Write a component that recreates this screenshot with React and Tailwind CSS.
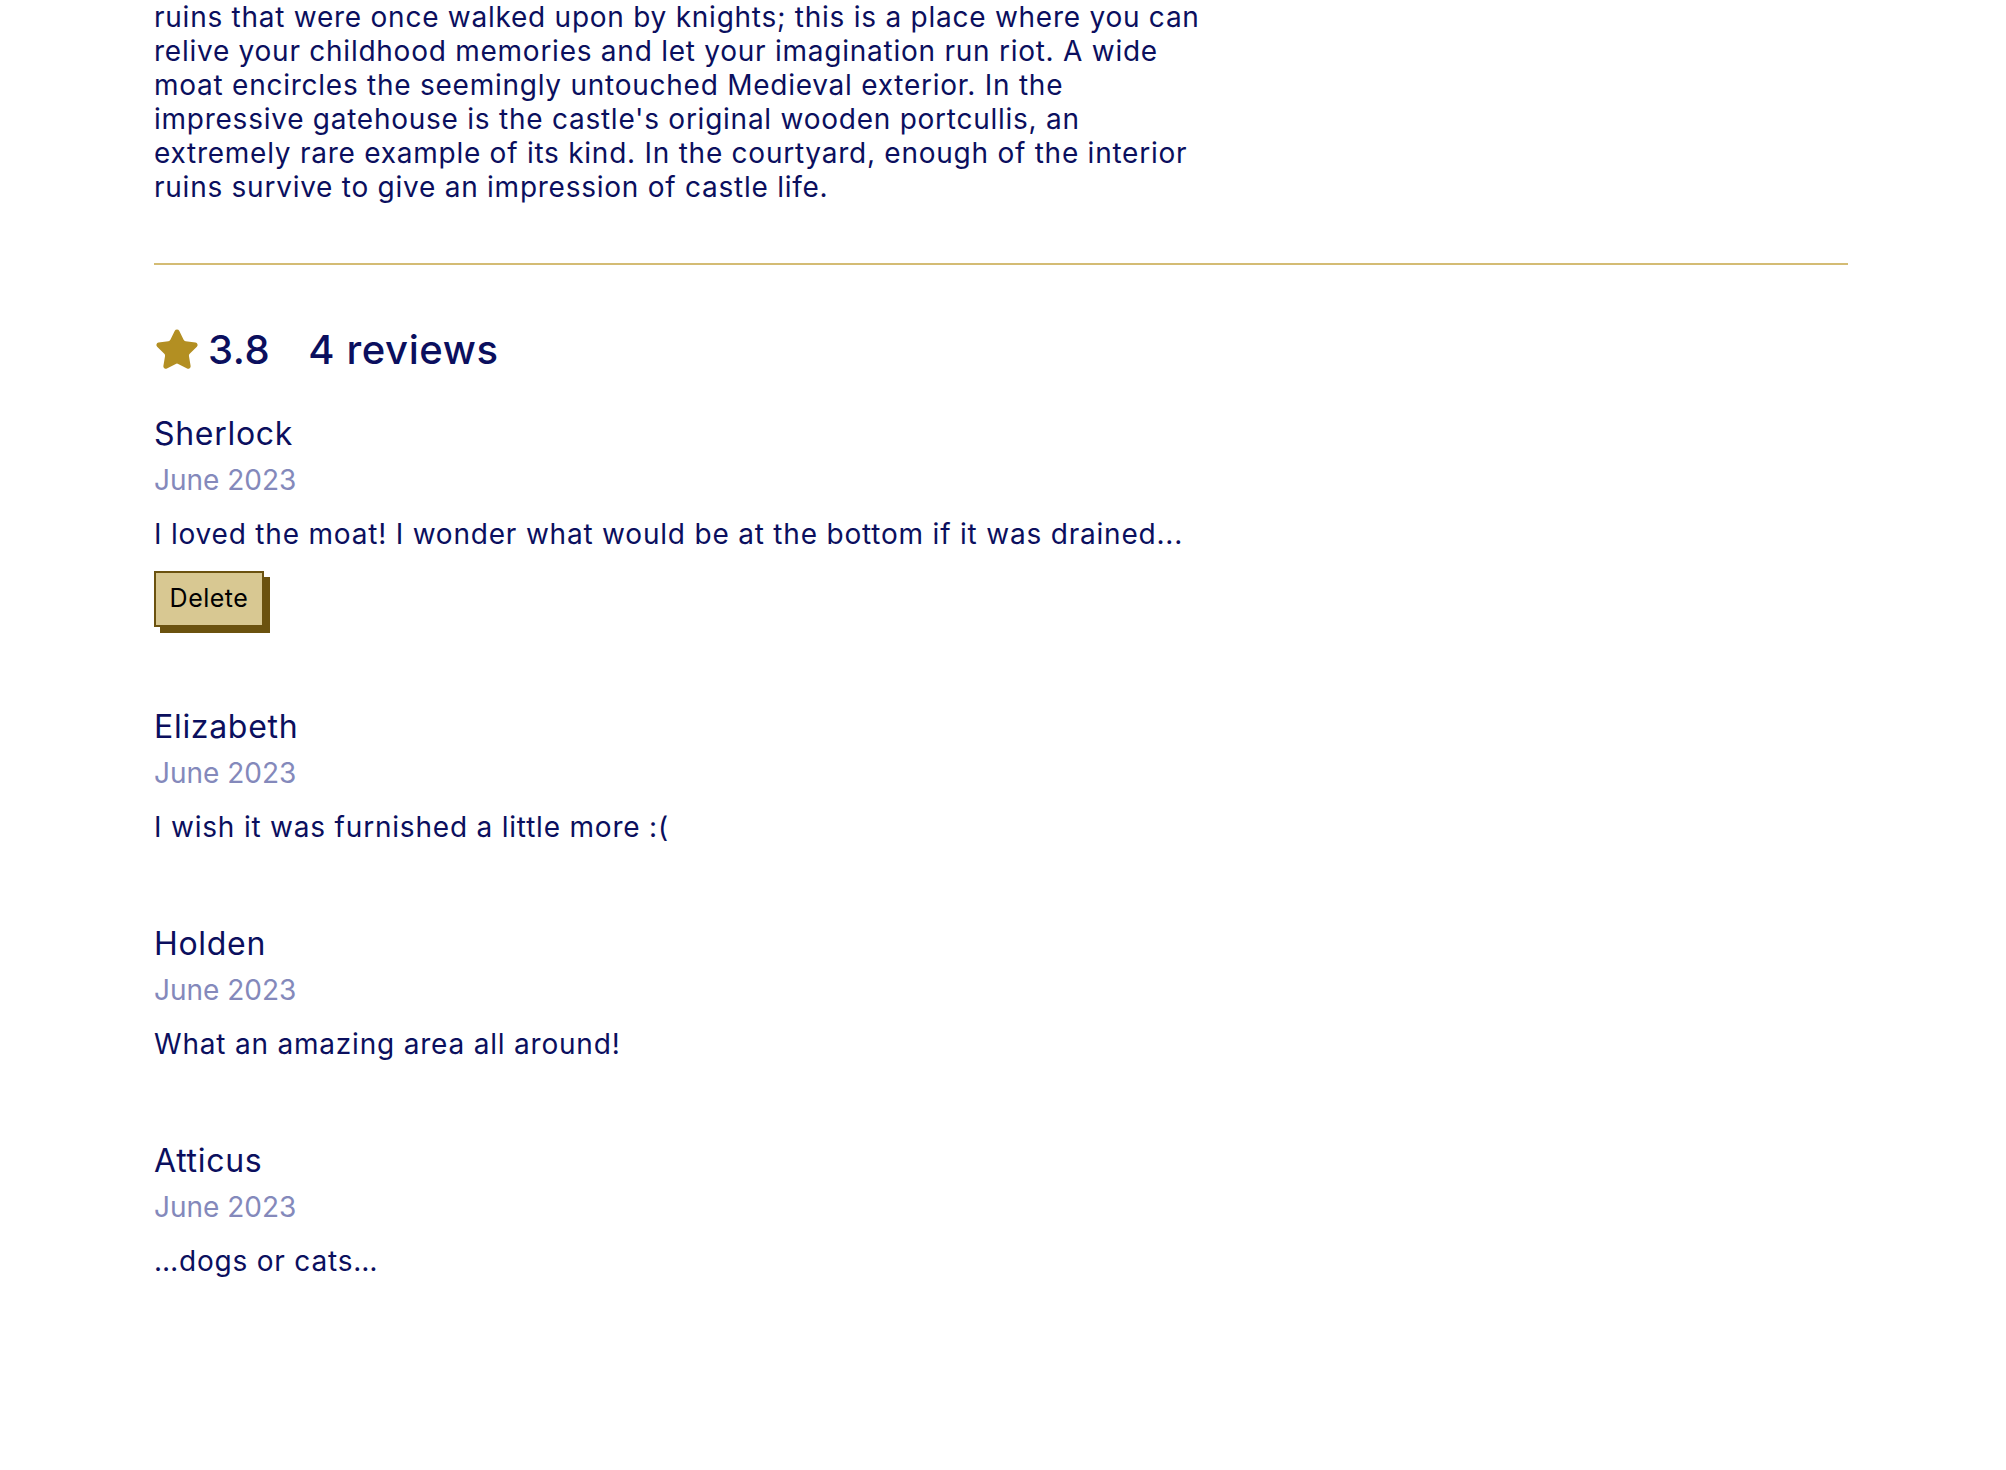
import { Star } from 'lucide-react';

const intro = [
  'ruins that were once walked upon by knights; this is a place where you can',
  'relive your childhood memories and let your imagination run riot. A wide',
  'moat encircles the seemingly untouched Medieval exterior. In the',
  "impressive gatehouse is the castle's original wooden portcullis, an",
  'extremely rare example of its kind. In the courtyard, enough of the interior',
  'ruins survive to give an impression of castle life.',
];

const reviews = [
  { name: 'Sherlock', date: 'June 2023', text: 'I loved the moat! I wonder what would be at the bottom if it was drained...', own: true },
  { name: 'Elizabeth', date: 'June 2023', text: 'I wish it was furnished a little more :(' },
  { name: 'Holden', date: 'June 2023', text: 'What an amazing area all around!' },
  { name: 'Atticus', date: 'June 2023', text: '…dogs or cats…' },
];

const Review = ({ review }) => (
  <div className="mb-[80px]">
    <h3 className="text-[32px] leading-[39px] tracking-[0.7px] text-[#0b0f5e]">{review.name}</h3>
    <p className="mt-[10px] text-[28px] leading-[34px] text-[#8489bb]">{review.date}</p>
    <p className="mt-[20px] text-[28px] leading-[34px] tracking-[0.8px] text-[#0b0f5e] whitespace-nowrap">{review.text}</p>
    {review.own && (
      <button className="mt-[20px] h-[56px] w-[110px] border-2 border-[#6b520f] bg-[#d8c892] text-[25px] tracking-[0.5px] text-black shadow-[6px_6px_0_#6b520f]">
        Delete
      </button>
    )}
  </div>
);

export default function App() {
  return (
    <div className="min-h-screen bg-white pl-[154px] pr-[158px] font-['Inter',sans-serif]">
      <p className="w-[1056px] text-[28px] leading-[34px] tracking-[0.75px] text-[#0b0f5e]">
        {intro.map((line) => (
          <span key={line} className="block whitespace-nowrap">{line}</span>
        ))}
      </p>

      <div className="mt-[59px] h-[2px] bg-[#d4bc74]" />

      <div className="mt-[60px] flex h-[49px] items-center text-[40px] font-medium tracking-[0.6px] text-[#0b0f5e]">
        <Star size={46} className="fill-[#b38f22] text-[#b38f22]" strokeWidth={1.5} />
        <span className="ml-[8px]">3.8</span>
        <span className="ml-[38px]">4 reviews</span>
      </div>

      <div className="mt-[40px]">
        {reviews.map((r) => (
          <Review key={r.name} review={r} />
        ))}
      </div>
    </div>
  );
}
